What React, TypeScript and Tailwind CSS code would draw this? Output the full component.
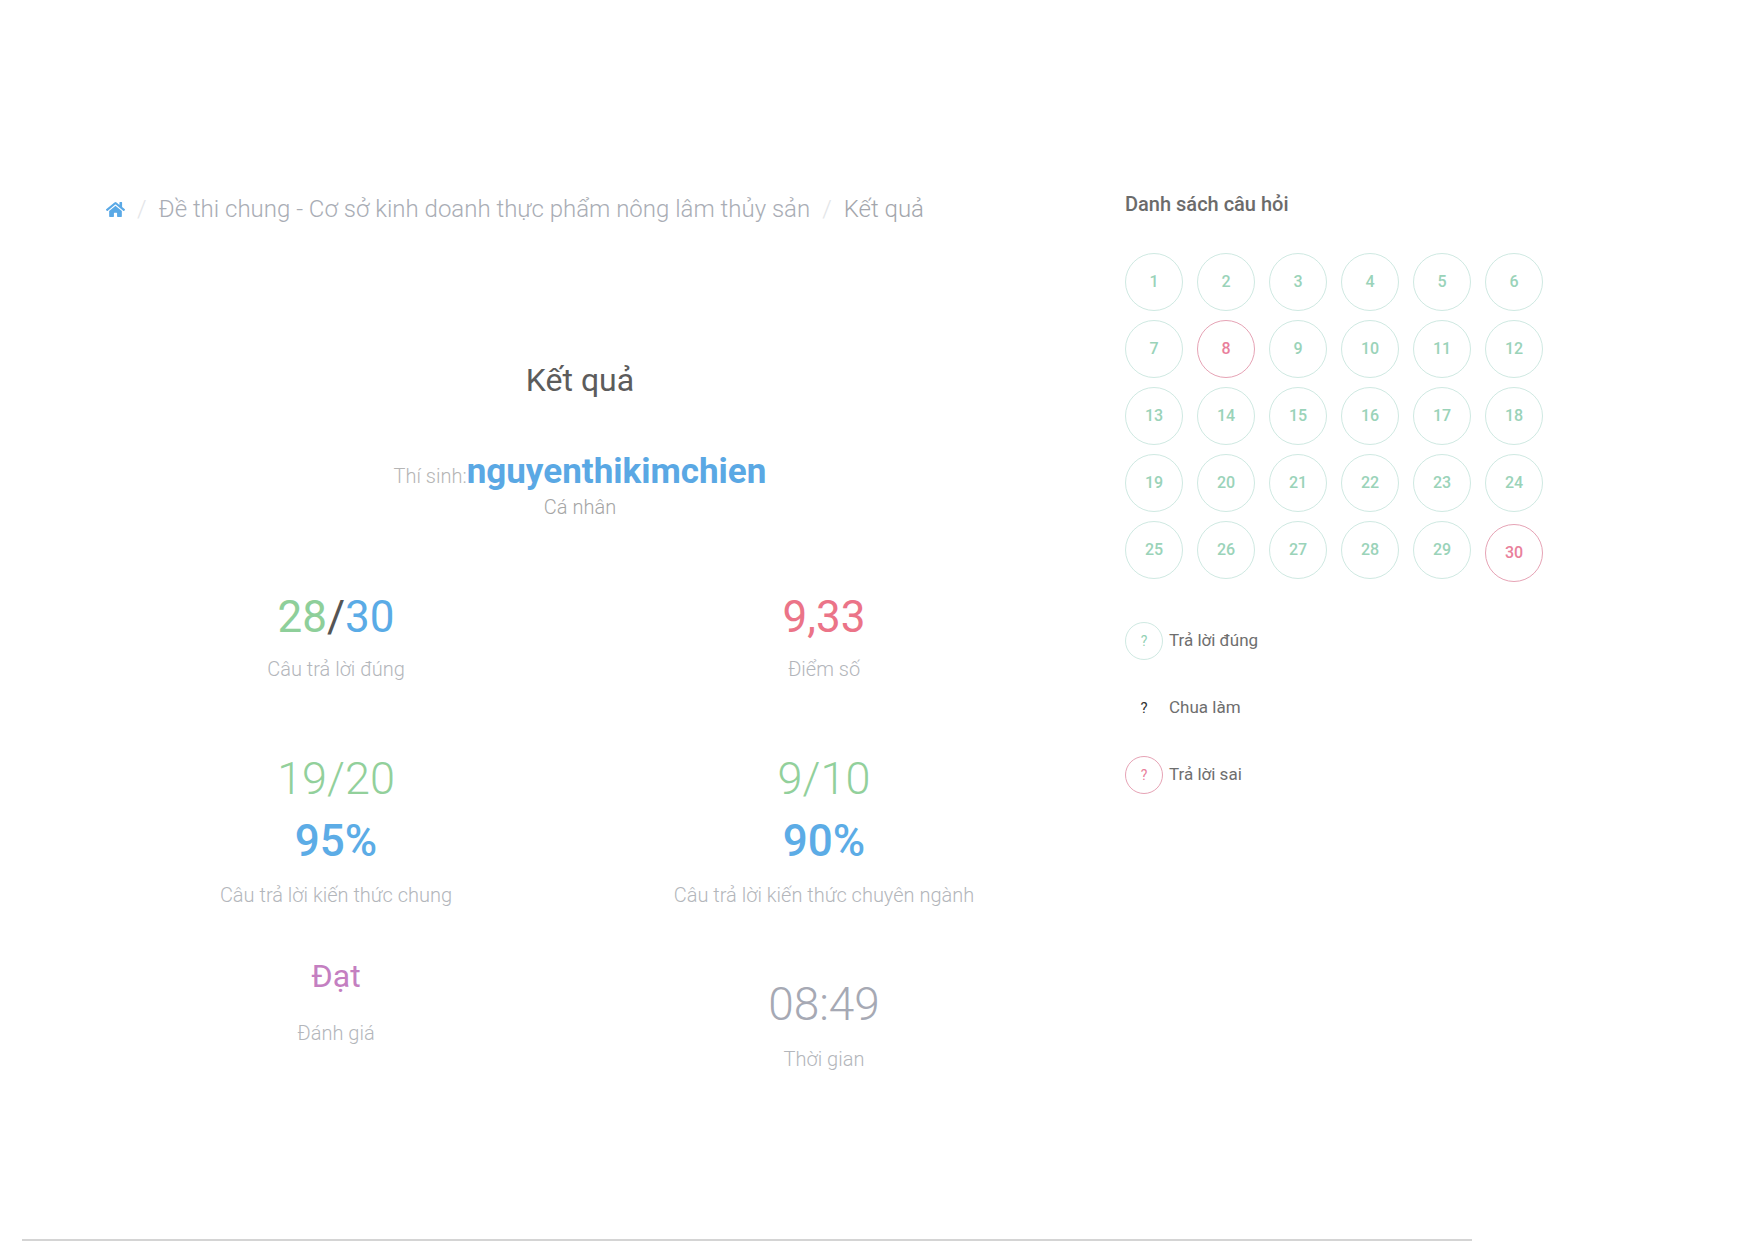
import { FaHome } from "react-icons/fa";

const questions = Array.from({ length: 30 }, (_, i) => i + 1);
const wrongAnswers = [8, 30];

const App = () => {
  return (
    <div className="flex h-[1241px] flex-col bg-white font-['Roboto','Liberation_Sans',sans-serif]">
      <div className="flex pl-[92px] pt-[190px]">
        <div className="w-[976px]">
          <nav className="mt-[2px] flex h-[34px] items-center pl-[14px] text-[24px] font-light text-[#a9adb5]">
            <FaHome className="h-[19px] w-[19px] text-[#5aa9e6]" />
            <span className="px-[12px] text-[#e3e5e8]">/</span>
            <span>Đề thi chung - Cơ sở kinh doanh thực phẩm nông lâm thủy sản</span>
            <span className="px-[12px] text-[#e3e5e8]">/</span>
            <span className="text-[#a3a6ac]">Kết quả</span>
          </nav>

          <section className="flex flex-col items-center">
            <h2 className="mt-[136px] text-[32px] leading-[36px] text-[#5c5c5c]">Kết quả</h2>
            <div className="mt-[55px] flex items-baseline leading-[38px]">
              <span className="text-[20px] font-light text-[#b5b5b5]">Thí sinh:</span>
              <span className="text-[35px] font-bold text-[#5aa8e4]">nguyenthikimchien</span>
            </div>
            <p className="mt-0 text-[20px] font-light leading-[24px] text-[#a5a5a5]">Cá nhân</p>
          </section>

          <div className="mt-[74px] grid grid-cols-2 items-start">
            <div className="flex flex-col items-center">
              <p className="text-[44px] leading-[48px]">
                <span className="text-[#8ecf9a]">28</span>
                <span className="text-[#555]">/</span>
                <span className="text-[#5aabe6]">30</span>
              </p>
              <p className="mt-[17px] text-[20px] font-light leading-[22px] text-[#b3b6bb]">Câu trả lời đúng</p>
            </div>
            <div className="flex flex-col items-center">
              <p className="text-[44px] leading-[48px] text-[#eb7488]">9,33</p>
              <p className="mt-[17px] text-[20px] font-light leading-[22px] text-[#b3b6bb]">Điểm số</p>
            </div>

            <div className="mt-[75px] flex flex-col items-center">
              <p className="text-[45px] font-light leading-[48px] text-[#92d09b]">19/20</p>
              <p className="mt-[14px] text-[44px] font-medium leading-[48px] text-[#5cace6]">95%</p>
              <p className="mt-[19px] text-[20px] font-light leading-[22px] text-[#b3b6bb]">Câu trả lời kiến thức chung</p>
            </div>
            <div className="mt-[75px] flex flex-col items-center">
              <p className="text-[45px] font-light leading-[48px] text-[#92d09b]">9/10</p>
              <p className="mt-[14px] text-[44px] font-medium leading-[48px] text-[#5cace6]">90%</p>
              <p className="mt-[19px] text-[20px] font-light leading-[22px] text-[#b3b6bb]">Câu trả lời kiến thức chuyên ngành</p>
            </div>

            <div className="mt-[52px] flex flex-col items-center">
              <p className="text-[32px] leading-[36px] text-[#c47fc1]">Đạt</p>
              <p className="mt-[28px] text-[20px] font-light leading-[22px] text-[#b3b6bb]">Đánh giá</p>
            </div>
            <div className="mt-[74px] flex flex-col items-center">
              <p className="text-[46px] font-light leading-[48px] text-[#a6a9b4]">08:49</p>
              <p className="mt-[20px] text-[20px] font-light leading-[22px] text-[#b3b6bb]">Thời gian</p>
            </div>
          </div>
        </div>

        <aside className="ml-[57px] pt-[2px]">
          <h3 className="text-[20px] font-medium leading-[24px] text-[#6b6b6b]">Danh sách câu hỏi</h3>
          <div className="mt-[37px] grid grid-cols-[repeat(6,58px)] gap-x-[14px] gap-y-[9px]">
            {questions.map((number) => {
              const isWrong = wrongAnswers.includes(number);
              return (
                <div
                  className={
                    isWrong
                      ? `flex h-[58px] w-[58px] items-center justify-center rounded-full border border-[#e6a3b5] text-[16px] font-medium text-[#e9809b] ${number === 30 ? "translate-y-[3px]" : ""}`
                      : "flex h-[58px] w-[58px] items-center justify-center rounded-full border border-[#cfe9e2] text-[16px] font-medium text-[#9ad3b9]"
                  }
                  key={number}
                >
                  {number}
                </div>
              );
            })}
          </div>

          <ul className="mt-[43px] flex flex-col gap-[29px] text-[17px] text-[#6e6e6e]">
            <li className="flex items-center gap-[6px]">
              <span className="flex h-[38px] w-[38px] items-center justify-center rounded-full border border-[#cfe9e2] text-[14px] text-[#93d1b4]">?</span>
              Trả lời đúng
            </li>
            <li className="flex items-center gap-[6px]">
              <span className="flex h-[38px] w-[38px] items-center justify-center text-[15px] text-[#333]">?</span>
              Chua làm
            </li>
            <li className="flex items-center gap-[6px]">
              <span className="flex h-[38px] w-[38px] items-center justify-center rounded-full border border-[#e6a3b5] text-[14px] text-[#e9809b]">?</span>
              Trả lời sai
            </li>
          </ul>
        </aside>
      </div>

      <div className="ml-[22px] mt-auto h-[2px] w-[1450px] bg-[#d4d4d4]" />
    </div>
  );
};

export default App;
